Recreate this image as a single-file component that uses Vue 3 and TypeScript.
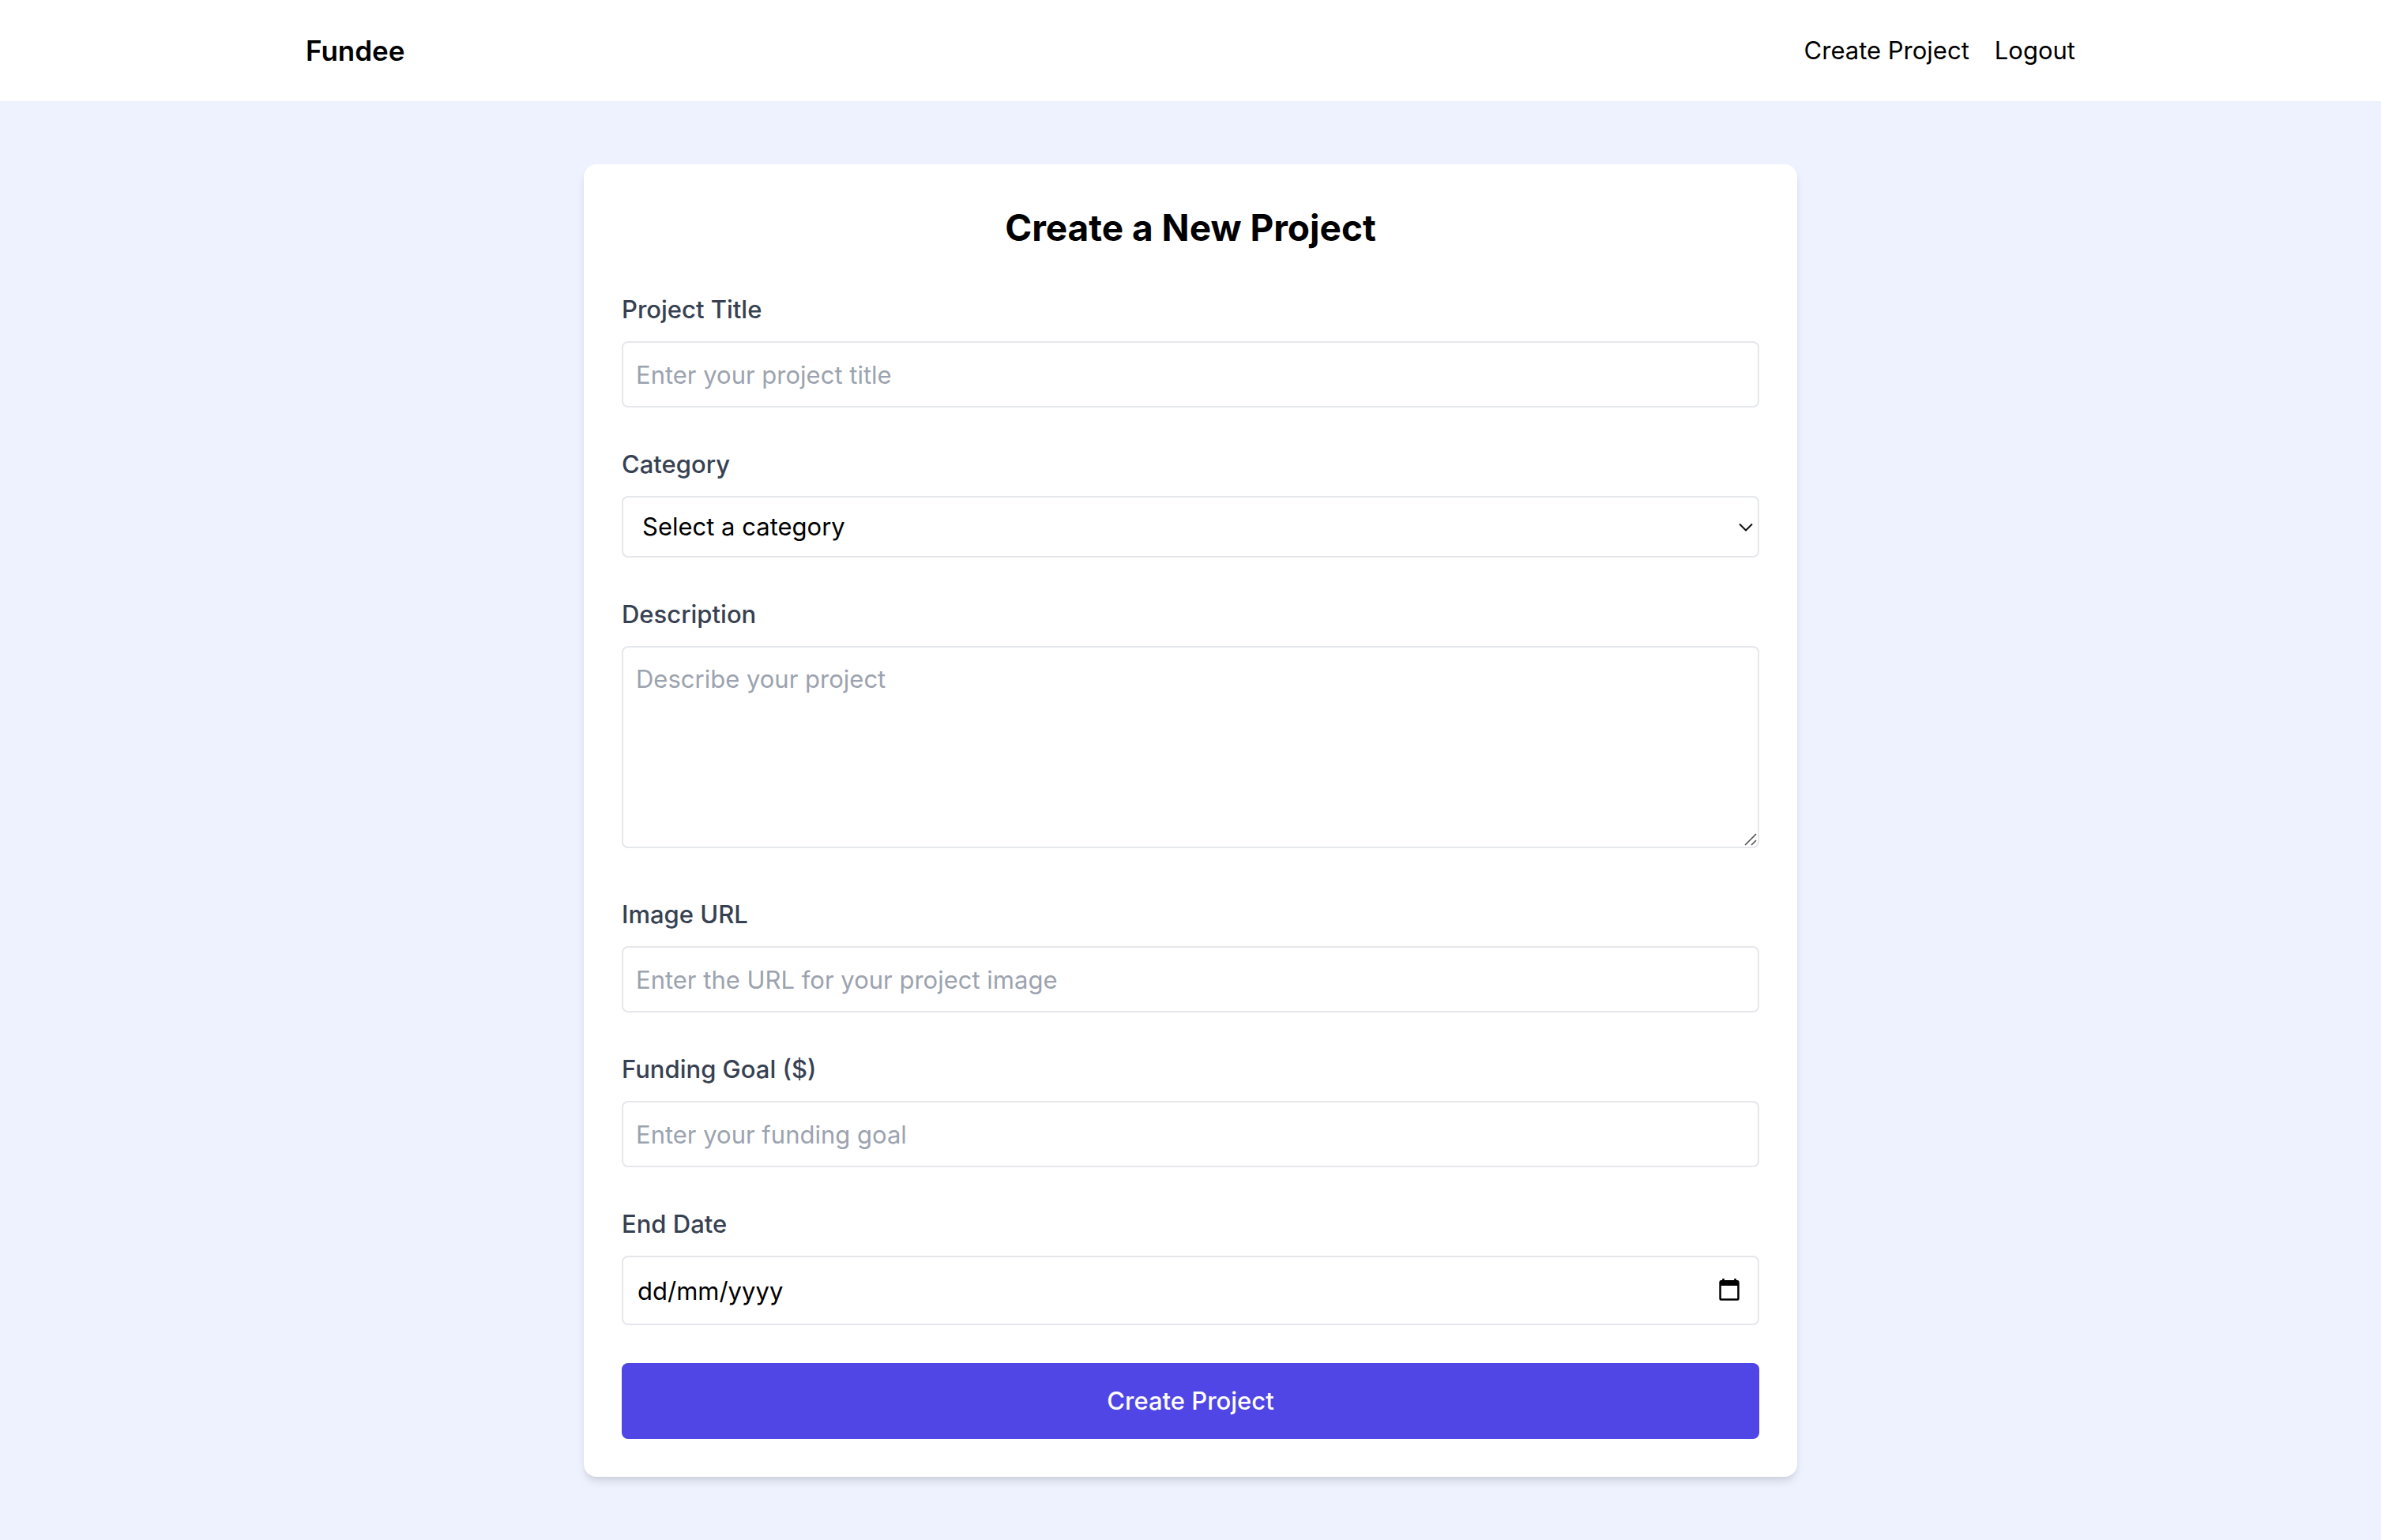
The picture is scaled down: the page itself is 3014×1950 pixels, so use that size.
<script setup lang="ts">
import { reactive } from 'vue'

const categories: string[] = ['Technology', 'Art', 'Education', 'Health', 'Community']

const form = reactive({
  title: '',
  category: '',
  description: '',
  imageUrl: '',
  goal: '',
  endDate: '',
})
</script>

<template>
  <div class="page">
    <header class="navbar">
      <div class="navbar-inner">
        <a class="brand" href="#">Fundee</a>
        <nav class="links">
          <a href="#">Create Project</a>
          <a href="#">Logout</a>
        </nav>
      </div>
    </header>

    <main class="content">
      <form class="card" @submit.prevent>
        <h1 class="heading">Create a New Project</h1>

        <div class="field">
          <label for="title">Project Title</label>
          <input id="title" v-model="form.title" class="control" type="text" placeholder="Enter your project title" />
        </div>

        <div class="field">
          <label for="category">Category</label>
          <div class="control-wrap">
            <select id="category" v-model="form.category" class="control select">
              <option value="">Select a category</option>
              <option v-for="name in categories" :key="name" :value="name">{{ name }}</option>
            </select>
            <svg class="chevron" viewBox="0 0 18 12" aria-hidden="true">
              <path d="M1 1.5L9 9.5L17 1.5" fill="none" stroke="#111" stroke-width="2" />
            </svg>
          </div>
        </div>

        <div class="field field-area">
          <label for="description">Description</label>
          <div class="control-wrap">
            <textarea id="description" v-model="form.description" class="control area" placeholder="Describe your project"></textarea>
            <svg class="grip" viewBox="0 0 16 16" aria-hidden="true">
              <path d="M1 15L15 1M9 15L15 9" fill="none" stroke="#555" stroke-width="1.7" />
            </svg>
          </div>
        </div>

        <div class="field">
          <label for="image">Image URL</label>
          <input id="image" v-model="form.imageUrl" class="control" type="text" placeholder="Enter the URL for your project image" />
        </div>

        <div class="field">
          <label for="goal">Funding Goal ($)</label>
          <input id="goal" v-model="form.goal" class="control" type="number" placeholder="Enter your funding goal" />
        </div>

        <div class="field">
          <label for="end-date">End Date</label>
          <div class="control-wrap">
            <input id="end-date" v-model="form.endDate" class="control date" type="text" placeholder="dd/mm/yyyy" />
            <button class="calendar" type="button" aria-label="Choose a date">
              <svg viewBox="0 0 26 28" aria-hidden="true">
                <path
                  fill="#000"
                  fill-rule="evenodd"
                  d="M4.200 0H6.800V2H19.200V0H21.800V2H23.500Q25.700 2 25.700 4.500V25.500Q25.700 27.700 23.500 27.700H2.500Q.3 27.700 .3 25.500V4.500Q.3 2 2.500 2H4.200ZM2.800 9V25.200H23.200V9Z"
                />
              </svg>
            </button>
          </div>
        </div>

        <button class="submit" type="submit">Create Project</button>
      </form>
    </main>
  </div>
</template>

<style>
body {
  margin: 0;
  background: #eef2ff;
}
</style>

<style scoped>
.page {
  min-height: 100vh;
  box-sizing: border-box;
  background: #eef2ff;
  color: #000;
  font-family: Inter, 'Liberation Sans', sans-serif;
  font-size: 31px;
  line-height: 48px;
}

.navbar {
  background: #fff;
}

.navbar-inner {
  display: flex;
  align-items: center;
  justify-content: space-between;
  box-sizing: border-box;
  max-width: 2240px;
  min-height: 128px;
  margin: 0 auto;
}

.navbar a {
  color: inherit;
  text-decoration: none;
}

.brand {
  font-size: 35px;
  font-weight: 600;
}

.links {
  display: flex;
  gap: 32px;
}

.content {
  padding: 80px 32px;
}

.card {
  display: flex;
  flex-direction: column;
  gap: 48px;
  box-sizing: border-box;
  max-width: 1536px;
  margin: 0 auto;
  padding: 48px;
  background: #fff;
  border-radius: 16px;
  box-shadow:
    0 8px 12px -2px rgba(0, 0, 0, 0.1),
    0 4px 8px -4px rgba(0, 0, 0, 0.1);
}

.heading {
  margin: 0;
  font-size: 46px;
  font-weight: 700;
  line-height: 64px;
  text-align: center;
}

.field {
  display: flex;
  flex-direction: column;
  gap: 16px;
}

.field-area {
  padding-bottom: 12px;
}

label {
  color: #374151;
  font-weight: 500;
}

.control-wrap {
  position: relative;
  display: flex;
}

.control {
  display: block;
  box-sizing: border-box;
  width: 100%;
  height: 84px;
  margin: 0;
  padding: 16px;
  border: 2px solid #e5e7eb;
  border-radius: 8px;
  background: #fff;
  color: #000;
  font: inherit;
}

.control::placeholder {
  color: #9ca3af;
  opacity: 1;
}

.select {
  height: 78px;
  padding: 0 48px 0 24px;
  appearance: none;
}

.area {
  height: 256px;
  resize: none;
}

.date {
  height: 88px;
  padding: 16px 64px 16px 18px;
}

.date::placeholder {
  color: #000;
}

.chevron {
  position: absolute;
  top: 34px;
  right: 8px;
  width: 18px;
  height: 12px;
  pointer-events: none;
}

.grip {
  position: absolute;
  right: 3px;
  bottom: 3px;
  width: 16px;
  height: 16px;
  pointer-events: none;
}

.calendar {
  position: absolute;
  top: 29px;
  right: 25px;
  width: 26px;
  height: 28px;
  padding: 0;
  border: 0;
  background: none;
  cursor: pointer;
}

.calendar svg {
  display: block;
  width: 100%;
  height: 100%;
}

.submit {
  padding: 24px;
  border: 0;
  border-radius: 8px;
  background: #4f46e5;
  color: #fff;
  font: inherit;
  font-weight: 500;
  cursor: pointer;
}
</style>
